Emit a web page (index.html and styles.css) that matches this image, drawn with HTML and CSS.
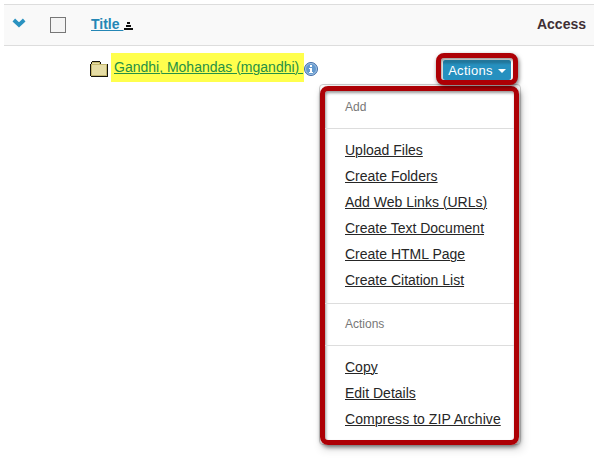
FILE: index.html
```
<!DOCTYPE html>
<html lang="en">
<head>
<meta charset="utf-8">
<title>Resources</title>
<link rel="stylesheet" href="styles.css">
</head>
<body>
<div class="listing">
  <header class="list-head">
    <svg class="chevron" width="14" height="10" viewBox="0 0 14 10"><path d="M1.8 2 7 6.8 12.2 2" fill="none" stroke="#2a92c0" stroke-width="3.8"/></svg>
    <span class="checkbox"></span>
    <a class="title" href="#">Title </a>
    <svg class="sort" width="9" height="8" viewBox="0 0 9 8" shape-rendering="crispEdges"><path d="M3 0h3v2H3zM2 3h5v2H2zM0 6h9v2H0z" fill="#111"/></svg>
    <span class="access">Access</span>
  </header>
  <main class="row">
    <svg class="folder" width="18" height="16" viewBox="0 0 18 16" shape-rendering="crispEdges"><path d="M0 3h1V1h1V0h8v1h1v2h7v13H1v-1H0z" fill="#15130c"/><path d="M1 3h1V1h8v2h7v12H1z" fill="#c3b66d"/><path d="M2 2h7v2h7v10H2z" fill="#e6dda5"/><path d="M1 3h9v1H1z" fill="#c3b66d"/></svg>
    <a class="name" href="#">Gandhi, Mohandas (mgandhi)&nbsp;</a>
    <svg class="info" width="14" height="14" viewBox="0 0 14 14"><circle cx="7" cy="7" r="6.5" fill="#6399ce" stroke="#456fa8"/><circle cx="7" cy="7" r="5.5" fill="none" stroke="#a8c5e4" stroke-width=".9"/><path d="M6 3h2v2H6zM5 6h3v4h1v1H5v-1h1V7H5z" fill="#fff"/></svg>
    <div class="action-wrap">
      <div class="frame button-frame"><button class="action">Actions<i class="caret"></i></button></div>
      <div class="dropdown">
        <nav class="frame menu">
          <h2 class="add-heading">Add</h2>
          <ul class="add-list">
            <li><a href="#">Upload Files</a></li>
            <li><a href="#">Create Folders</a></li>
            <li><a href="#">Add Web Links (URLs)</a></li>
            <li><a href="#">Create Text Document</a></li>
            <li><a href="#">Create HTML Page</a></li>
            <li><a href="#">Create Citation List</a></li>
          </ul>
          <h2 class="actions-heading">Actions</h2>
          <ul class="actions-list">
            <li><a href="#">Copy</a></li>
            <li><a href="#">Edit Details</a></li>
            <li><a class="wide" href="#">Compress to ZIP Archive</a></li>
          </ul>
        </nav>
      </div>
    </div>
  </main>
</div>
</body>
</html>
```
FILE: styles.css
```
* { box-sizing: border-box; }
body { margin: 0; background: #fff; color: #262626; font: 14px/16px "Liberation Sans", Arial, sans-serif; overflow: hidden; }
.listing { padding: 4px 0 0 4px; height: 459px; }
.list-head { display: flex; height: 42px; background: #f9f9f9; border-top: 1px solid #ddd; border-bottom: 1px solid #ddd; padding: 0 8px; }
.chevron { margin-top: 13px; }
.checkbox { width: 16px; height: 16px; margin: 12px 0 0 24px; border: 1px solid #777; background: #f4f4f4; }
.title { margin: 11px 0 0 25px; color: #2486b5; font-weight: bold; white-space: pre; }
.sort { margin: 17px 0 0 1px; }
.access { margin: 11px 0 0 auto; color: #402f35; font-weight: bold; }
.row { display: flex; align-items: flex-start; padding: 7px 0 0 86px; }
.folder { margin-top: 8px; }
.name { width: 193px; height: 29px; margin-left: 3px; padding: 6px 0 0 3px; background: #ffff4d; color: #259045; white-space: nowrap; }
.info { margin-top: 9px; }
.action-wrap { position: relative; margin-left: 118px; }
.frame { border: 5px solid #ad0005; border-radius: 8px; box-shadow: 1px 2px 4px rgba(0,0,0,.55), inset 1px 2px 3px rgba(0,0,0,.4); }
.button-frame { position: relative; z-index: 1; width: 82px; height: 32px; padding: 2px; background: #fff; }
.action { display: flex; align-items: center; justify-content: center; width: 68px; height: 20px; padding: 2px 0 0; border: 0; border-radius: 2px; background: linear-gradient(#21769b, #21769b 2px, #2690bf 5px); color: #fff; font: 13px/16px "Liberation Sans", Arial, sans-serif; letter-spacing: .3px; }
.caret { margin-left: 5px; border: 4px solid transparent; border-top-color: #fff; border-bottom: 0; }
.dropdown { position: absolute; top: 31px; right: -3px; width: 202px; height: 361px; padding: 1px 2px 0 1px; background: #fff; border: 1px solid #ccc; border-radius: 4px; box-shadow: 2px 5px 9px rgba(0,0,0,.12); }
.menu { height: 359px; width: 199px; margin-left: -1px; }
h2 { margin: 0; padding-left: 20px; color: #777; font-size: 12px; line-height: 16px; font-weight: normal; border-bottom: 1px solid #ddd; }
.add-heading { height: 38px; padding-top: 8px; }
.actions-heading { height: 43px; padding-top: 12px; border-top: 1px solid #ddd; }
ul { list-style: none; margin: 0; padding: 8px 0 0 20px; }
.add-list { height: 174px; }
li { height: 26px; line-height: 26px; white-space: nowrap; }
a { text-decoration: underline; text-underline-offset: 1px; text-decoration-thickness: 1px; }
li a { color: #262626; }
.wide { letter-spacing: .05px; }
```
